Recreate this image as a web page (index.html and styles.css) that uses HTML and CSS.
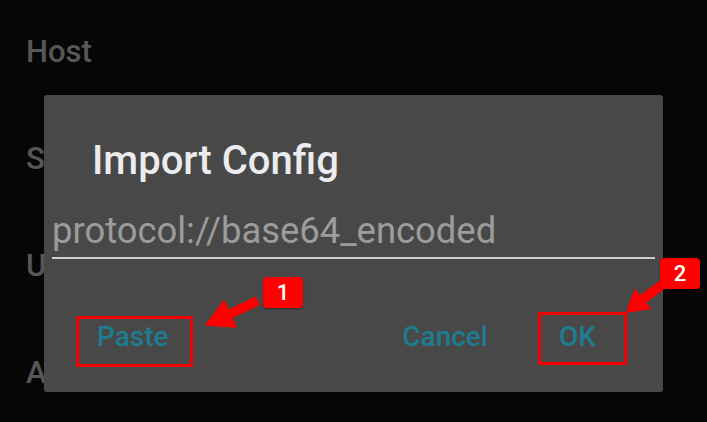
FILE: index.html
```html
<!DOCTYPE html>
<html>
<head>
<meta charset="utf-8">
<link rel="stylesheet" href="styles.css">
</head>
<body>
<div class="page">
  <ul class="fields">
    <li>Host</li>
    <li>Server</li>
    <li>User</li>
    <li>Address</li>
  </ul>
</div>
<div class="dialog">
  <h1 class="title">Import Config</h1>
  <div class="input">protocol://base64_encoded</div>
  <div class="actions">
    <span class="btn">Paste</span>
    <span class="btn btn-cancel">Cancel</span>
    <span class="btn btn-ok">OK</span>
  </div>
</div>
<div class="mark mark-paste"></div>
<div class="mark mark-ok"></div>
<svg class="arrows" width="707" height="422" viewBox="0 0 707 422">
  <polygon points="206,325 224,301 228.3,310.4 255.3,297.4 258.7,304.6 231.7,317.6 236,327" fill="#ff0000" stroke="#ff0000" stroke-width="1.5" stroke-linejoin="round"/>
  <polygon points="627,312 634.9,290 640,296.2 659.5,281.9 664.5,288.1 645,302.4 650.1,308.6" fill="#ff0000" stroke="#ff0000" stroke-width="1.5" stroke-linejoin="round"/>
</svg>
<div class="badge badge-1">1</div>
<div class="badge badge-2">2</div>
</body>
</html>
```
FILE: styles.css
```css
html, body {
  margin: 0;
  padding: 0;
  background: #060606;
  width: 707px;
  height: 422px;
  overflow: hidden;
  font-family: Roboto, "Noto Sans", sans-serif;
}
.page {
  padding: 34px 0 0 26px;
}
.fields {
  list-style: none;
  margin: 0;
  padding: 0;
  display: flex;
  flex-direction: column;
  gap: 71px;
}
.fields li {
  font-size: 31px;
  line-height: 36px;
  font-weight: 500;
  color: #575757;
}
.dialog {
  position: absolute;
  left: 44px;
  top: 95px;
  width: 619px;
  height: 297px;
  background: #484848;
  border-radius: 3px;
  box-sizing: border-box;
  padding: 43px 8px 0 8px;
}
.title {
  margin: 0 0 26px 40px;
  font-size: 40px;
  line-height: 46px;
  font-weight: 500;
  color: #ececee;
}
.input {
  font-size: 36.4px;
  line-height: 40px;
  color: #9c9c9c;
  padding: 1px 0 6px 0;
  border-bottom: 2px solid #cfcfcf;
}
.actions {
  display: flex;
  align-items: center;
  margin-top: 62px;
  padding: 0 59px 0 45px;
}
.btn {
  font-size: 28px;
  line-height: 32px;
  font-weight: 500;
  color: #1e7c90;
}
.btn-cancel {
  margin-left: auto;
}
.btn-ok {
  margin-left: 71px;
}
.mark {
  position: absolute;
  border: 3px solid #f00000;
  box-sizing: border-box;
}
.mark-paste {
  left: 76px;
  top: 316px;
  width: 117px;
  height: 51px;
}
.mark-ok {
  left: 538px;
  top: 312px;
  width: 89px;
  height: 53px;
}
.arrows {
  position: absolute;
  left: 0;
  top: 0;
}
.badge {
  position: absolute;
  width: 40px;
  height: 31px;
  background: #ff0000;
  border-radius: 4px;
  color: #ffffff;
  font-size: 22px;
  font-weight: 500;
  line-height: 31px;
  text-align: center;
  box-shadow: 0 1px 2px rgba(0,0,0,0.4);
}
.badge-1 {
  left: 263px;
  top: 277px;
}
.badge-2 {
  left: 660px;
  top: 258px;
}
```
